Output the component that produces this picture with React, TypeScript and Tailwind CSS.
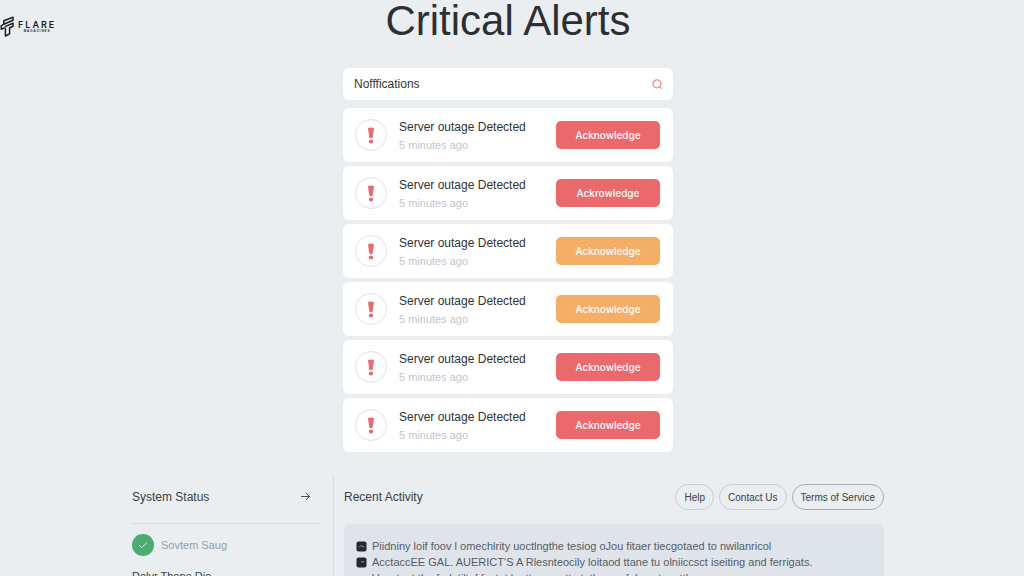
import { useState } from "react";

const alerts = [
  { id: 1, title: "Server outage Detected", time: "5 minutes ago", level: "critical", action: "Acknowledge" },
  { id: 2, title: "Server outage Detected", time: "5 minutes ago", level: "critical", action: "Ackrowledge" },
  { id: 3, title: "Server outage Detected", time: "5 minutes ago", level: "warning", action: "Acknowledge" },
  { id: 4, title: "Server outage Detected", time: "5 minutes ago", level: "warning", action: "Acknowledge" },
  { id: 5, title: "Server outage Detected", time: "5 minutes ago", level: "critical", action: "Acknowledge" },
  { id: 6, title: "Server outage Detected", time: "5 minutes ago", level: "critical", action: "Acknowledge" },
];

const links = [
  { name: "Help", href: "#help", style: "border-[#c9ced3]" },
  { name: "Contact Us", href: "#contact", style: "border-[#c9ced3]" },
  { name: "Terms of Service", href: "#terms", style: "border-[#a9afb5]" },
];

function Logo() {
  return (
    <a href="#home" aria-label="Flare Magazines" className="flex items-center gap-1 text-[#1d1f22]">
      <svg className="h-[21px] w-[14px]" viewBox="0 0 14 21" fill="none" stroke="currentColor" strokeWidth="1.5" strokeLinejoin="round">
        <path d="M3.800 8.200V4.800L13 1.200v3L3.800 8.200 1.200 9.800v3.400l3.400-1.400" />
        <path d="M4.800 10.600 13 7.200v3L9.600 11.800v6L5.400 20v-8.400" />
      </svg>
      <span className="flex flex-col items-center">
        <span className="font-['Inter',sans-serif] text-[9px] leading-[9px] font-semibold tracking-[2px]">FLARE</span>
        <span className="text-[3px] leading-[4px] font-bold tracking-[1px]">MAGAZINES</span>
      </span>
    </a>
  );
}

function AlertCard({ alert }: { alert: (typeof alerts)[number] }) {
  return (
    <li className="flex h-[54px] items-center rounded-md bg-white pr-[13px] pl-3">
      <span className="flex size-8 shrink-0 items-center justify-center rounded-full border border-[#dce2e8]">
        <svg className="h-[17px] w-2" viewBox="0 0 8 17" fill="#e86b6d">
          <path d="M1 1.500Q1 .4 4 .4T7 1.500L5.700 10.300Q5.500 11.300 4 11.300T2.300 10.300Z" />
          <ellipse cx="4" cy="14.500" rx="2.200" ry="1.900" />
        </svg>
      </span>
      <div className="ml-3 flex-1 pt-px">
        <h2 className="text-xs leading-[18px] text-[#2f3235]">{alert.title}</h2>
        <p className="text-[11px] leading-[18px] text-[#bec6cf]">{alert.time}</p>
      </div>
      <button
        className={`h-7 w-[104px] rounded-[5px] font-['Inter',sans-serif] text-[10px] font-medium text-white ${
          alert.level === "critical" ? "bg-[#eb696d]" : "bg-[#f4ae67]"
        }`}
      >
        {alert.action}
      </button>
    </li>
  );
}

export default function App() {
  const [query, setQuery] = useState("");

  return (
    <div className="h-screen overflow-hidden bg-[#eaeef1] pr-2 font-['Liberation_Sans',sans-serif] text-[#3b3e42]">
      <header className="grid h-[68px] grid-cols-[1fr_auto_1fr] items-start">
        <div className="pt-4">
          <Logo />
        </div>
        <h1 className="text-[42px] leading-[42px] text-[#2d2f33]">Critical Alerts</h1>
      </header>

      <main>
        <section className="mx-auto w-full max-w-[330px]">
          <form className="flex h-8 items-center rounded-md bg-white px-[11px]" onSubmit={(e) => e.preventDefault()}>
            <input
              type="text"
              aria-label="Search notifications"
              placeholder="Nofffications"
              value={query}
              onChange={(e) => setQuery(e.target.value)}
              className="min-w-0 flex-1 text-xs text-[#34373a] outline-none placeholder:text-[#34373a]"
            />
            <button aria-label="Search">
              <svg className="size-[10px]" viewBox="0 0 10 10" fill="none" stroke="#f4898b" strokeWidth="1.300" strokeLinecap="round">
                <circle cx="4.900" cy="4.800" r="4" />
                <path d="M7.400 7.600 9.300 9.200" />
              </svg>
            </button>
          </form>

          <ul className="mt-2 flex flex-col gap-1">
            {alerts.map((alert) => (
              <AlertCard key={alert.id} alert={alert} />
            ))}
          </ul>
        </section>

        <div className="mx-auto mt-6 flex w-full max-w-[752px]">
          {/* System status */}
          <section className="w-[202px] shrink-0 border-r border-[#d8dde2] pr-3">
            <div className="flex h-12 items-center justify-between border-b border-[#d5dbe1] pr-[10px] pb-[6px]">
              <h2 className="text-xs">System Status</h2>
              <button aria-label="Open system status">
                <svg className="size-[11px]" viewBox="0 0 11 11" fill="none" stroke="#4b4f53" strokeLinecap="round" strokeLinejoin="round">
                  <path d="M1.500 5.500h8M6 2l3.500 3.500L6 9" />
                </svg>
              </button>
            </div>
            <div className="mt-[10px] flex items-center gap-[7px] text-[11px] text-[#929eab]">
              <span className="flex size-[22px] items-center justify-center rounded-full bg-[#4daa70]">
                <svg className="size-[10px]" viewBox="0 0 10 10" fill="none" stroke="#e0f3e6" strokeLinecap="round" strokeLinejoin="round">
                  <path d="m1.200 5.200 2.500 2.500 5-5" />
                </svg>
              </span>
              Sovtem Saug
            </div>
            <p className="mt-3 text-[11px] leading-4">Dolvr Thone Dio</p>
          </section>

          {/* Recent activity */}
          <section className="min-w-0 flex-1 pl-[10px]">
            <div className="flex h-12 items-center justify-between pb-[6px]">
              <h2 className="text-xs">Recent Activity</h2>
              <nav className="flex gap-[5px]">
                {links.map((link) => (
                  <a
                    key={link.name}
                    href={link.href}
                    className={`flex h-[26px] items-center rounded-full border px-2 text-[10px] whitespace-nowrap ${link.style}`}
                  >
                    {link.name}
                  </a>
                ))}
              </nav>
            </div>
            <div className="rounded-md bg-[#dfe4eb] px-3 pt-[14px] pb-4 text-[11px] leading-4 text-[#565c63]">
              <ul>
                <li className="flex items-center gap-[5px] whitespace-nowrap">
                  <svg className="size-[11px] shrink-0" viewBox="0 0 11 11">
                    <rect x=".5" y=".5" width="10" height="10" rx="2" fill="#25282d" />
                    <path d="M3 6.500 5 4.500l1 1 1-.6 1 1.600" fill="none" stroke="#aeb3b9" strokeWidth=".8" />
                  </svg>
                  Piidniny loif foov l omechlrity uoctlngthe tesiog oJou fitaer tiecgotaed to nwilanricol
                </li>
                <li className="flex items-center gap-[5px] whitespace-nowrap">
                  <svg className="size-[11px] shrink-0" viewBox="0 0 11 11">
                    <rect x=".5" y=".5" width="10" height="10" rx="2" fill="#25282d" />
                    <path d="M5 4.800h3" fill="none" stroke="#aeb3b9" strokeWidth=".8" />
                  </svg>
                  AcctaccEE GAL. AUERICT'S A Rlesnteocily loitaod ttane tu olniiccsct iseiting and ferrigats.
                </li>
                <li className="pl-4 whitespace-nowrap">Vocotant tho fodotiltof foctot lontto onoottg tothoso ofuls ootonottho</li>
              </ul>
            </div>
          </section>
        </div>
      </main>
    </div>
  );
}
